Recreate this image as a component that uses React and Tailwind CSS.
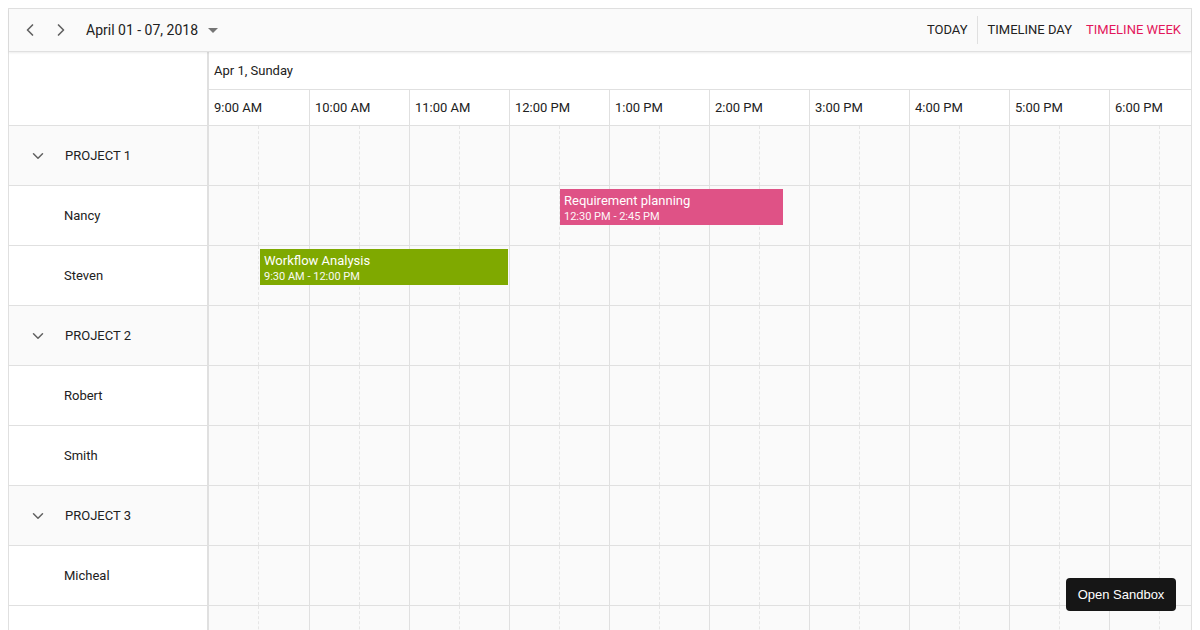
import { ChevronLeft, ChevronRight, ChevronDown } from 'lucide-react'

const hours = ['9:00 AM', '10:00 AM', '11:00 AM', '12:00 PM', '1:00 PM', '2:00 PM', '3:00 PM', '4:00 PM', '5:00 PM', '6:00 PM']

const resources = [
  { id: 'p1', name: 'PROJECT 1', group: true },
  { id: 'nancy', name: 'Nancy' },
  { id: 'steven', name: 'Steven' },
  { id: 'p2', name: 'PROJECT 2', group: true },
  { id: 'robert', name: 'Robert' },
  { id: 'smith', name: 'Smith' },
  { id: 'p3', name: 'PROJECT 3', group: true },
  { id: 'micheal', name: 'Micheal' },
  { id: 'extra', name: '' },
]

const events = [
  { id: 1, resource: 'nancy', title: 'Requirement planning', time: '12:30 PM - 2:45 PM', start: 12.5, end: 14.75, color: 'bg-[#df5286]' },
  { id: 2, resource: 'steven', title: 'Workflow Analysis', time: '9:30 AM - 12:00 PM', start: 9.5, end: 12, color: 'bg-[#7fa900]' },
]

const HOUR_W = 100

const App = () => {
  return (
    <div className="h-[630px] overflow-hidden bg-white pt-2 px-2 font-['Roboto',sans-serif] text-[13px] text-[#212121]">
      <div className="border border-[#e0e0e0] h-[640px] flex flex-col">

        {/* Toolbar */}
        <div className="h-[43px] shrink-0 bg-[#fafafa] flex items-center justify-between border-b border-[#e0e0e0] shadow-[0_1px_2px_rgba(0,0,0,0.08)] relative z-10">
          <div className="flex items-center">
            <button className="w-[33px] h-[42px] flex items-center justify-end pr-[2px] text-[#616161]">
              <ChevronLeft size={20} strokeWidth={2} />
            </button>
            <button className="w-[34px] h-[42px] flex items-center justify-center text-[#616161] ml-[2px]">
              <ChevronRight size={20} strokeWidth={2} />
            </button>
            <div className="flex items-center ml-[8px] text-[14px] text-[#212121]">
              <span>April 01 - 07, 2018</span>
              <svg width="10" height="6" viewBox="0 0 10 6" className="ml-[10px] mt-[1px]">
                <path d="M0 0 L10 0 L5 5 Z" fill="#757575" />
              </svg>
            </div>
          </div>
          <div className="flex items-center text-[13px] pr-[10px]">
            <span className="px-[9px] text-[#212121]">TODAY</span>
            <div className="w-px h-[28px] bg-[#e0e0e0]" />
            <span className="pl-[10px] pr-[14px] text-[#212121]">TIMELINE DAY</span>
            <span className="text-[#e3165b]">TIMELINE WEEK</span>
          </div>
        </div>

        {/* Header */}
        <div className="flex shrink-0">
          <div className="w-[200px] shrink-0 border-r-2 border-[#e0e0e0] border-b h-[74px]" />
          <div className="flex-1 overflow-hidden">
            <div className="h-[38px] border-b border-[#e0e0e0] flex items-center pl-[5px]">Apr 1, Sunday</div>
            <div className="flex h-[36px] border-b border-[#e0e0e0]">
              {hours.map((h, i) => (
                <div key={h} className={`w-[100px] shrink-0 flex items-center pl-[5px] ${i > 0 ? 'border-l border-[#e0e0e0]' : ''}`}>
                  {h}
                </div>
              ))}
            </div>
          </div>
        </div>

        {/* Body */}
        <div className="flex flex-1 overflow-hidden">
          <div className="w-[200px] shrink-0 border-r-2 border-[#e0e0e0]">
            {resources.map((r) => (
              <div
                key={r.id}
                className={`h-[60px] border-b border-[#e0e0e0] flex items-center ${r.group ? 'bg-[#fafafa]' : 'bg-white'}`}
              >
                {r.group ? (
                  <>
                    <ChevronDown size={18} strokeWidth={2} className="ml-[20px] text-[#616161]" />
                    <span className="ml-[18px]">{r.name}</span>
                  </>
                ) : (
                  <span className="ml-[55px]">{r.name}</span>
                )}
              </div>
            ))}
          </div>

          <div className="flex-1 overflow-hidden relative bg-[#fafafa]">
            {resources.map((r) => (
              <div key={r.id} className="h-[60px] border-b border-[#e0e0e0] flex">
                {hours.map((h, i) => (
                  <div key={h} className={`w-[100px] shrink-0 flex ${i > 0 ? 'border-l border-[#e0e0e0]' : ''}`}>
                    <div className="w-1/2 border-r border-dashed border-[#e6e6e6]" />
                    <div className="w-1/2" />
                  </div>
                ))}
              </div>
            ))}

            {events.map((ev) => {
              const row = resources.findIndex((r) => r.id === ev.resource)
              return (
                <div
                  key={ev.id}
                  className={`absolute h-[36px] ${ev.color} text-white px-[4px] pt-[4px] leading-tight`}
                  style={{
                    top: row * 60 + 3,
                    left: (ev.start - 9) * HOUR_W + 1,
                    width: (ev.end - ev.start) * HOUR_W - 2,
                  }}
                >
                  <div className="text-[13px] font-normal leading-[16px]">{ev.title}</div>
                  <div className="text-[11px] leading-[14px] mt-[1px] opacity-95">{ev.time}</div>
                </div>
              )
            })}
          </div>
        </div>
      </div>

      <button className="fixed right-[24px] bottom-[19px] w-[110px] h-[33px] rounded-[4px] bg-[#161616] text-white text-[13px] font-['Liberation_Sans',Arial,sans-serif]">
        Open Sandbox
      </button>
    </div>
  )
}

export default App
